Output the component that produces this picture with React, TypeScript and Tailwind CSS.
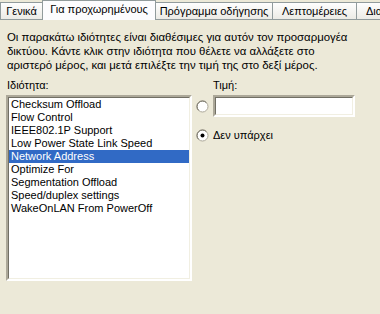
import React from 'react';

const tabs = [
  { label: 'Γενικά', w: 'w-[43px]' },
  { label: 'Για προχωρημένους', w: 'w-[114px]', active: true },
  { label: 'Πρόγραμμα οδήγησης', w: 'w-[118px]' },
  { label: 'Λεπτομέρειες', w: 'w-[85px]' },
  { label: 'Διαχείριση ενέργειας', w: 'w-[120px]' },
];

const items = [
  'Checksum Offload',
  'Flow Control',
  'IEEE802.1P Support',
  'Low Power State Link Speed',
  'Network Address',
  'Optimize For',
  'Segmentation Offload',
  'Speed/duplex settings',
  'WakeOnLAN From PowerOff',
];

function Radio({ checked }: { checked?: boolean }) {
  return (
    <svg width="13" height="13" viewBox="0 0 13 13" className="shrink-0">
      <circle cx="6.5" cy="6.5" r="5.5" fill="#fff" stroke="#ACA899" />
      <path d="M2.6 10.4 A5.5 5.5 0 0 1 10.4 2.6" fill="none" stroke="#716F64" />
      {checked && <circle cx="6.5" cy="6.5" r="2" fill="#000" />}
    </svg>
  );
}

export default function App() {
  return (
    <div
      className="w-[380px] h-[314px] overflow-hidden bg-[#ECE9D8] text-[11px] leading-[13px] text-black"
      style={{ fontFamily: '"Liberation Sans", Arial, sans-serif' }}
    >
      <div className="flex h-[20px] items-end">
        {tabs.map((t) =>
          t.active ? (
            <div
              key={t.label}
              className={`${t.w} h-[20px] shrink-0 bg-[#FCFCFE] border-t border-x border-[#919B9C] flex items-center justify-center pb-[2px] whitespace-nowrap -ml-px`}
            >
              {t.label}
            </div>
          ) : (
            <div
              key={t.label}
              className={`${t.w} h-[18px] shrink-0 bg-gradient-to-b from-[#FEFEFE] to-[#ECEBE6] border border-[#919B9C] flex items-center justify-center whitespace-nowrap -ml-px first:ml-0`}
            >
              {t.label}
            </div>
          ),
        )}
      </div>

      <div className="px-[7px] pt-[10px]">
        <p className="text-[11.4px] leading-[14px]">
          Οι παρακάτω ιδιότητες είναι διαθέσιμες για αυτόν τον προσαρμογέα
          <br />
          δικτύου. Κάντε κλικ στην ιδιότητα που θέλετε να αλλάξετε στο
          <br />
          αριστερό μέρος, και μετά επιλέξτε την τιμή της στο δεξί μέρος.
        </p>

        <div className="mt-[7px] flex">
          <div className="w-[186px] -ml-px">
            <div className="h-[16px] pl-px">Ιδιότητα:</div>
            <div className="h-[186px] border-2 border-t-[#ACA899] border-l-[#ACA899] border-r-white border-b-white">
              <div className="h-full border border-t-[#716F64] border-l-[#716F64] border-r-[#F1EFE2] border-b-[#F1EFE2] bg-white">
                {items.map((it) => (
                  <div
                    key={it}
                    className={`h-[13px] pl-[2px] whitespace-nowrap ${
                      it === 'Network Address' ? 'bg-[#316AC5] text-white' : ''
                    }`}
                  >
                    {it}
                  </div>
                ))}
              </div>
            </div>
          </div>

          <div className="ml-[4px] w-[160px]">
            <div className="h-[16px] pl-[17px]">Τιμή:</div>
            <div className="flex items-center gap-[4px]">
              <Radio />
              <div className="w-[142px] h-[22px] border-2 border-t-[#ACA899] border-l-[#ACA899] border-r-white border-b-white">
                <div className="h-full border border-t-[#716F64] border-l-[#716F64] border-r-[#F1EFE2] border-b-[#F1EFE2] bg-white" />
              </div>
            </div>
            <div className="mt-[12px] flex items-center gap-[4px]">
              <Radio checked />
              <span>Δεν υπάρχει</span>
            </div>
          </div>
        </div>
      </div>
    </div>
  );
}
